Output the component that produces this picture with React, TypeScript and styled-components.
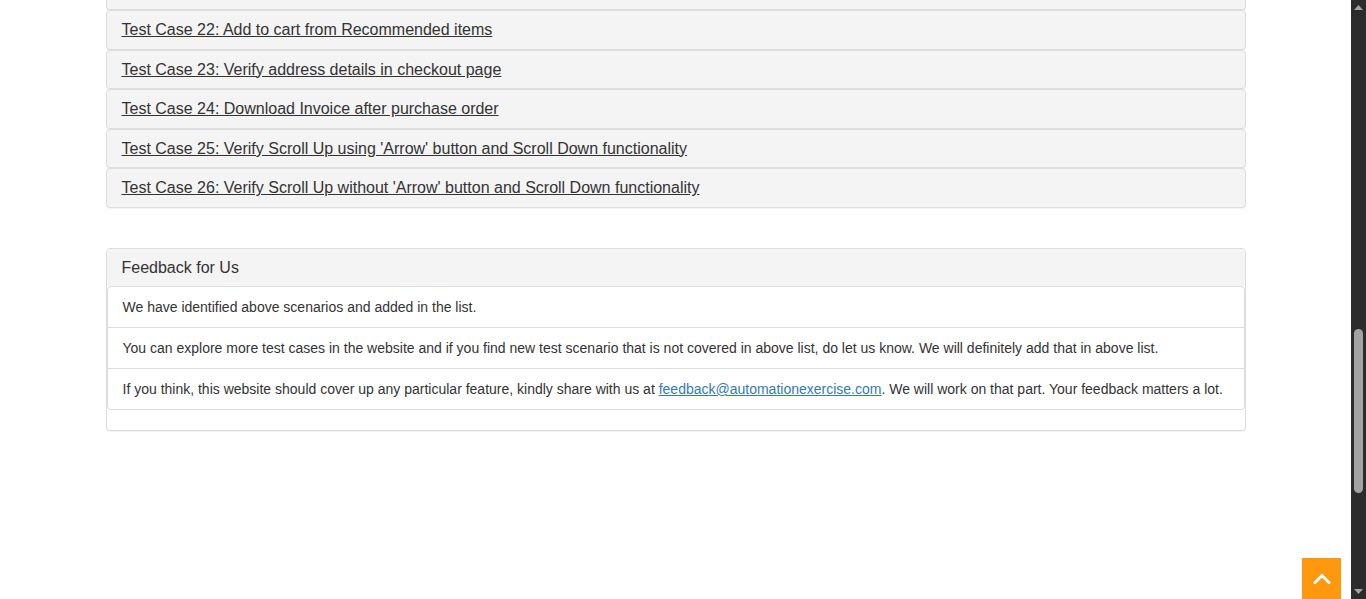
import React from "react";
import styled, { createGlobalStyle } from "styled-components";

const GlobalStyle = createGlobalStyle`
  html, body {
    margin: 0;
    padding: 0;
    background: #fff;
    overflow: hidden;
  }
  body {
    font-family: "Liberation Sans", Arial, Helvetica, sans-serif;
    font-size: 14px;
    line-height: 1.42857;
    color: #333;
  }
  * { box-sizing: border-box; }
`;

const Viewport = styled.div`
  display: flex;
  height: 100vh;
  overflow: hidden;
`;

const Main = styled.main`
  flex: 1;
  min-width: 0;
`;

const Container = styled.div`
  width: 1170px;
  margin: 0 auto;
  padding: 0 15px;
`;

const CaseList = styled.div`
  margin-bottom: 40px;
`;

const CasePanel = styled.div`
  background: #f4f4f4;
  border: 1px solid #ddd;
  border-radius: 4px;
  box-shadow: 0 1px 1px rgba(0, 0, 0, 0.05);
`;

const CaseSliver = styled(CasePanel)`
  height: 10px;
  border-top: none;
  border-top-left-radius: 0;
  border-top-right-radius: 0;
`;

const CaseHeading = styled.div`
  padding: 10px 15px;
`;

const CaseTitle = styled.h4`
  margin: 0;
  font-size: 16px;
  font-weight: 400;
  line-height: 1.1;
  color: #333;
`;

const CaseLink = styled.a`
  color: #333;
  text-decoration: underline;
  cursor: pointer;
`;

const Panel = styled.div`
  background: #fff;
  border: 1px solid #ddd;
  border-radius: 4px;
  box-shadow: 0 1px 1px rgba(0, 0, 0, 0.05);
`;

const PanelHeading = styled.div`
  background: #f4f4f4;
  padding: 10px 15px;
  border-top-left-radius: 3px;
  border-top-right-radius: 3px;
`;

const PanelTitle = styled.h4`
  margin: 0;
  font-size: 16px;
  font-weight: 400;
  line-height: 17px;
  color: #333;
`;

const ListGroup = styled.ul`
  list-style: none;
  margin: 0 0 20px;
  padding: 0;
`;

const ListItem = styled.li`
  display: block;
  padding: 10px 15px;
  margin-bottom: -1px;
  background: #fff;
  border: 1px solid #ddd;
  font-size: 14px;
  line-height: 20px;
  color: #333;
  &:first-child {
    border-top-left-radius: 4px;
    border-top-right-radius: 4px;
  }
  &:last-child {
    margin-bottom: 0;
    border-bottom-left-radius: 4px;
    border-bottom-right-radius: 4px;
  }
`;

const MailLink = styled.a`
  color: #337ab7;
  text-decoration: underline;
`;

const ScrollTrack = styled.div`
  width: 15px;
  flex: none;
  background: #2c2c2c;
  display: flex;
  flex-direction: column;
  align-items: center;
`;

const ArrowBox = styled.div`
  height: 15px;
  width: 15px;
  display: flex;
  align-items: center;
  justify-content: center;
`;

const ThumbArea = styled.div`
  flex: 1;
  width: 100%;
  display: flex;
  justify-content: center;
  padding-top: 314px;
  padding-bottom: 91px;
`;

const Thumb = styled.div`
  width: 9px;
  height: 100%;
  border-radius: 5px;
  background: #a3a3a3;
`;

const ScrollUpButton = styled.a`
  position: fixed;
  right: 25px;
  bottom: 0;
  width: 39px;
  height: 41px;
  background: #fe980f;
  display: flex;
  align-items: center;
  justify-content: center;
  cursor: pointer;
`;

const cases = [
  "Test Case 22: Add to cart from Recommended items",
  "Test Case 23: Verify address details in checkout page",
  "Test Case 24: Download Invoice after purchase order",
  "Test Case 25: Verify Scroll Up using 'Arrow' button and Scroll Down functionality",
  "Test Case 26: Verify Scroll Up without 'Arrow' button and Scroll Down functionality",
];

export default function App() {
  return (
    <>
      <GlobalStyle />
      <Viewport>
        <Main>
          <Container>
            <CaseList>
              <CaseSliver />
              {cases.map((c) => (
                <CasePanel key={c}>
                  <CaseHeading>
                    <CaseTitle>
                      <CaseLink>{c}</CaseLink>
                    </CaseTitle>
                  </CaseHeading>
                </CasePanel>
              ))}
            </CaseList>
            <Panel>
              <PanelHeading>
                <PanelTitle>Feedback for Us</PanelTitle>
              </PanelHeading>
              <ListGroup>
                <ListItem>We have identified above scenarios and added in the list.</ListItem>
                <ListItem>
                  You can explore more test cases in the website and if you find new test scenario
                  that is not covered in above list, do let us know. We will definitely add that in
                  above list.
                </ListItem>
                <ListItem>
                  If you think, this website should cover up any particular feature, kindly share with
                  us at <MailLink>feedback@automationexercise.com</MailLink>. We will work on that
                  part. Your feedback matters a lot.
                </ListItem>
              </ListGroup>
            </Panel>
          </Container>
        </Main>
        <ScrollTrack>
          <ArrowBox>
            <svg width="9" height="5" viewBox="0 0 9 5">
              <polygon points="4.5,0 9,5 0,5" fill="#a3a3a3" />
            </svg>
          </ArrowBox>
          <ThumbArea>
            <Thumb />
          </ThumbArea>
          <ArrowBox>
            <svg width="9" height="5" viewBox="0 0 9 5">
              <polygon points="0,0 9,0 4.5,5" fill="#a3a3a3" />
            </svg>
          </ArrowBox>
        </ScrollTrack>
      </Viewport>
      <ScrollUpButton aria-label="Scroll to top">
        <svg width="18" height="11" viewBox="0 0 18 11">
          <polyline
            points="2,9.5 9,2.5 16,9.5"
            fill="none"
            stroke="#fff"
            strokeWidth="3"
            strokeLinecap="square"
          />
        </svg>
      </ScrollUpButton>
    </>
  );
}
